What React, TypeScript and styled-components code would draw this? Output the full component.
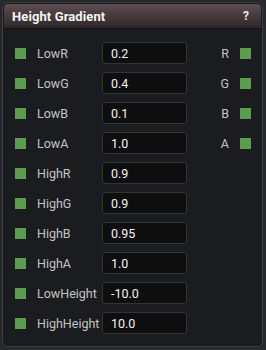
import React from 'react'
import styled, { createGlobalStyle } from 'styled-components'

const GlobalStyle = createGlobalStyle`
  html, body {
    margin: 0;
    padding: 0;
    background: #27282b;
  }
  body {
    font-family: Roboto, "Liberation Sans", sans-serif;
    width: 266px;
    height: 350px;
    overflow: hidden;
  }
`

interface param {
  name: string,
  value: string,
  channel?: string
}

const params: Array<param> = [
  { name: 'LowR', value: '0.2', channel: 'R' },
  { name: 'LowG', value: '0.4', channel: 'G' },
  { name: 'LowB', value: '0.1', channel: 'B' },
  { name: 'LowA', value: '1.0', channel: 'A' },
  { name: 'HighR', value: '0.9' },
  { name: 'HighG', value: '0.9' },
  { name: 'HighB', value: '0.95' },
  { name: 'HighA', value: '1.0' },
  { name: 'LowHeight', value: '-10.0' },
  { name: 'HighHeight', value: '10.0' },
]

const App = () => {
  return (
    <>
      <GlobalStyle />
      <Screen>
        <Panel>
          <Header>
            <Title>Height Gradient</Title>
            <Help>?</Help>
          </Header>
          <Body>
            {params.map((p) => (
              <Row key={p.name}>
                <Pin />
                <Label>{p.name}</Label>
                <ValueBox>{p.value}</ValueBox>
                <Spacer />
                {p.channel && (
                  <>
                    <Channel>{p.channel}</Channel>
                    <Pin />
                  </>
                )}
              </Row>
            ))}
          </Body>
        </Panel>
      </Screen>
    </>
  )
}

const Screen = styled.div`
  padding: 2px 3px 3px 2px;
  height: 350px;
  box-sizing: border-box;
`
const Panel = styled.div`
  height: 100%;
  box-sizing: border-box;
  border: 1px solid #3b3c40;
  border-radius: 5px;
  background: #1b1c1f;
  overflow: hidden;
  display: flex;
  flex-direction: column;
`
const Header = styled.div`
  margin: 1px 1px 0 1px;
  height: 24px;
  border-radius: 4px 4px 0 0;
  background: linear-gradient(to bottom, #5f4f51 0%, #483b3d 45%, #2d2728 100%);
  border-bottom: 1px solid #141416;
  display: flex;
  align-items: center;
  justify-content: space-between;
  padding: 0 12px 0 8px;
`
const Title = styled.span`
  color: #f4f4f4;
  font-weight: bold;
  font-size: 13px;
  letter-spacing: 0.1px;
`
const Help = styled.span`
  color: #e8e8e8;
  font-weight: bold;
  font-size: 12px;
`
const Body = styled.div`
  padding: 9px 11px 0 12px;
  display: flex;
  flex-direction: column;
`
const Row = styled.div`
  height: 30px;
  display: flex;
  align-items: center;
`
const Pin = styled.div`
  width: 11px;
  height: 11px;
  background: #5b9c4e;
  flex-shrink: 0;
`
const Label = styled.span`
  width: 65px;
  margin-left: 11px;
  color: #c4c4c4;
  font-size: 12.5px;
  white-space: nowrap;
`
const ValueBox = styled.div`
  width: 85px;
  height: 22px;
  box-sizing: border-box;
  border: 1px solid #333438;
  border-radius: 3px;
  background: #0e0e0f;
  color: #f2f2f2;
  font-size: 12.5px;
  padding-left: 8px;
  display: flex;
  align-items: center;
`
const Spacer = styled.div`
  flex: 1;
`
const Channel = styled.span`
  color: #c4c4c4;
  font-size: 12.5px;
  margin-right: 11px;
`

export default App
